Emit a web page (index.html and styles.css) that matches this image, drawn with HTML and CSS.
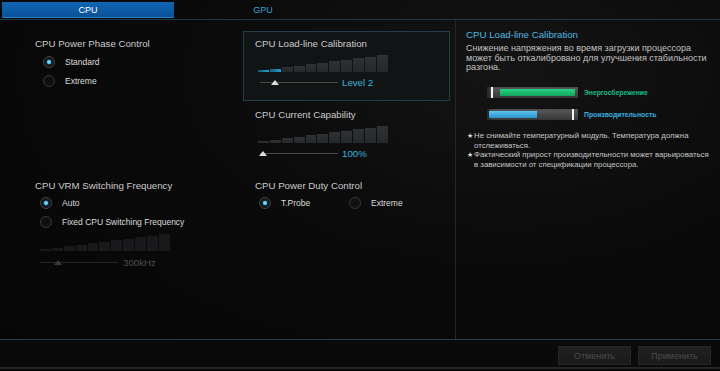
FILE: index.html
```html
<html>
<head>
    <title>CPU Power</title>
    <link rel="stylesheet" href="styles.css">
</head>
<body>
    <div id="tabs">
        <div class="tab active">CPU</div>
        <div class="tab">GPU</div>
    </div>

    <div id="main">
        <div id="settings">
            <div class="group left">
                <p class="title">CPU Power Phase Control</p>
                <div class="radios wide">
                    <div class="radio checked"><span class="dot"></span>Standard</div>
                    <div class="radio"><span class="dot"></span>Extreme</div>
                </div>
            </div>

            <div class="middle">
                <div class="group box">
                    <p class="title">CPU Load-line Calibration</p>
                    <div class="steps">
                        <span class="on" style="height:2px"></span>
                        <span class="on" style="height:3.5px"></span>
                        <span style="height:5px"></span>
                        <span style="height:6.5px"></span>
                        <span style="height:8px"></span>
                        <span style="height:9.5px"></span>
                        <span style="height:11px"></span>
                        <span style="height:12.5px"></span>
                        <span style="height:14px"></span>
                        <span style="height:15.5px"></span>
                        <span style="height:17px"></span>
                    </div>
                    <div class="track-row">
                        <div class="track"><span class="thumb" style="left:15px"></span></div>
                        <span class="value">Level 2</span>
                    </div>
                </div>

                <div class="group plain">
                    <p class="title">CPU Current Capability</p>
                    <div class="steps">
                        <span style="height:2px"></span>
                        <span style="height:3.5px"></span>
                        <span style="height:5px"></span>
                        <span style="height:6.5px"></span>
                        <span style="height:8px"></span>
                        <span style="height:9.5px"></span>
                        <span style="height:11px"></span>
                        <span style="height:12.5px"></span>
                        <span style="height:14px"></span>
                        <span style="height:15.5px"></span>
                        <span style="height:17px"></span>
                    </div>
                    <div class="track-row">
                        <div class="track"><span class="thumb" style="left:3px"></span></div>
                        <span class="value">100%</span>
                    </div>
                </div>
            </div>

            <div class="group left lower">
                <p class="title">CPU VRM Switching Frequency</p>
                <div class="radios">
                    <div class="radio checked"><span class="dot"></span>Auto</div>
                    <div class="radio"><span class="dot"></span>Fixed CPU Switching Frequency</div>
                </div>
                <div class="disabled">
                    <div class="steps">
                        <span style="height:2px"></span>
                        <span style="height:3.5px"></span>
                        <span style="height:5px"></span>
                        <span style="height:6.5px"></span>
                        <span style="height:8px"></span>
                        <span style="height:9.5px"></span>
                        <span style="height:11px"></span>
                        <span style="height:12.5px"></span>
                        <span style="height:14px"></span>
                        <span style="height:15.5px"></span>
                        <span style="height:17px"></span>
                    </div>
                    <div class="track-row">
                        <div class="track"><span class="thumb" style="left:18px"></span></div>
                        <span class="value">300kHz</span>
                    </div>
                </div>
            </div>

            <div class="group plain lower">
                <p class="title">CPU Power Duty Control</p>
                <div class="radios inline">
                    <div class="radio checked"><span class="dot"></span>T.Probe</div>
                    <div class="radio"><span class="dot"></span>Extreme</div>
                </div>
            </div>
        </div>

        <div id="help">
            <p class="help-title">CPU Load-line Calibration</p>
            <p class="help-text">Снижение напряжения во время загрузки процессора может быть откалибровано для улучшения стабильности разгона.</p>

            <div class="meter">
                <div class="bar saving"><span class="mark"></span><span class="fill"></span></div>
                <span class="label green">Энергосбережение</span>
            </div>
            <div class="meter">
                <div class="bar perf"><span class="fill"></span><span class="mark"></span></div>
                <span class="label blue">Производительность</span>
            </div>

            <div class="notes">
                <div class="note"><span class="star">★</span><span>Не снимайте температурный модуль. Температура должна отслеживаться.</span></div>
                <div class="note"><span class="star">★</span><span>Фактический прирост производительности может варьироваться в зависимости от спецификации процессора.</span></div>
            </div>
        </div>
    </div>

    <div id="footer">
        <button class="btn">Отменить</button>
        <button class="btn">Применить</button>
    </div>
</body>
</html>
```

FILE: styles.css
```css
body {
    margin: 0;
    width: 720px;
    height: 371px;
    overflow: hidden;
    color: #c8c8c8;
    font-family: "Liberation Sans", Arial, sans-serif;
    background: radial-gradient(ellipse at 70% 20%, #141414 0%, #0a0a0a 45%, #060606 100%);
}

p {
    margin: 0;
}

#tabs {
    display: flex;
    height: 20px;
    padding: 2px 0 0 2px;
    box-sizing: border-box;
    border-bottom: 1px solid #17394a;
}

    #tabs .tab {
        width: 172px;
        height: 16px;
        line-height: 16px;
        text-align: center;
        font-size: 9px;
        color: #3b9fd6;
    }

    #tabs .tab + .tab {
        width: 178px;
    }

    #tabs .active {
        color: #fff;
        background: linear-gradient(#1165b4, #0a5198);
        box-shadow: inset 0 -1px 0 #2f7fc4;
    }

#main {
    display: flex;
    height: 319px;
}

#settings {
    width: 455px;
    display: grid;
    grid-template-columns: 243px 212px;
    grid-template-rows: 149px auto;
    padding-top: 11px;
    box-sizing: border-box;
}

.title {
    font-size: 9.7px;
    line-height: 12px;
    color: #cbcbcb;
    white-space: nowrap;
}

.group.left {
    padding: 7px 0 0 35px;
}

.group.lower {
    padding-top: 0;
}

.group.plain {
    padding-left: 12px;
}

.middle {
    display: flex;
    flex-direction: column;
}

.box {
    width: 207px;
    height: 70px;
    box-sizing: border-box;
    padding: 6px 11px 0 11px;
    border: 1px solid #223f48;
    background: #111415;
}

.plain:not(.lower) {
    margin-top: 8px;
}

/* radio buttons */
.radios {
    margin-top: 4px;
    padding-left: 5px;
    display: flex;
    flex-direction: column;
    gap: 5px;
}

    .radios.wide {
        margin-top: 5px;
        padding-left: 8px;
    }

    .radios.inline {
        flex-direction: row;
        gap: 0;
        padding-left: 4px;
    }

        .radios.inline .radio {
            width: 90px;
        }

.radio {
    display: flex;
    align-items: center;
    height: 14px;
    font-size: 8.5px;
    color: #dcdcdc;
    white-space: nowrap;
}

    .radio .dot {
        width: 12px;
        height: 12px;
        box-sizing: border-box;
        border: 1px solid #363636;
        border-radius: 50%;
        background: radial-gradient(#0c0c0c, #151515);
        margin-right: 10px;
        display: flex;
        align-items: center;
        justify-content: center;
    }

    .radio.checked .dot {
        border-color: #444;
    }

        .radio.checked .dot::after {
            content: "";
            width: 4px;
            height: 4px;
            border-radius: 50%;
            background: #6bd8ff;
            box-shadow: 0 0 3px #2aa6e0;
        }

/* staircase slider */
.steps {
    display: flex;
    align-items: flex-end;
    gap: 1px;
    height: 17px;
    margin: 5px 0 0 3px;
}

    .steps span {
        width: 10.9px;
        background: linear-gradient(#2f3234, #26292b);
    }

        .steps span.on {
            background: linear-gradient(90deg, #125c78, #2a9fcb);
        }

.track-row {
    display: flex;
    align-items: center;
    height: 10px;
    margin: 5px 0 0 5px;
}

.track {
    position: relative;
    width: 78px;
    height: 1px;
    background: #4a4a4a;
}

    .track .thumb {
        position: absolute;
        top: -2px;
        margin-left: -4px;
        width: 0;
        height: 0;
        border-left: 4px solid transparent;
        border-right: 4px solid transparent;
        border-bottom: 5px solid #dedede;
    }

.value {
    margin-left: 4px;
    font-size: 9.7px;
    color: #3bb3dd;
}

.disabled {
    margin-top: 3px;
}

    .disabled .steps {
        margin-left: 5px;
    }

        .disabled .steps span {
            background: #17191a;
        }

    .disabled .track-row {
        margin-top: 6px;
    }

    .disabled .track {
        background: #262626;
    }

        .disabled .track .thumb {
            border-bottom-color: #3a3a3a;
        }

    .disabled .value {
        margin-left: 5px;
        color: #4e4e4e;
    }

/* help panel */
#help {
    flex: 1;
    border-left: 1px solid #262626;
    padding: 9px 8px 0 10px;
}

.help-title {
    font-size: 9.7px;
    line-height: 12px;
    color: #4cb9e2;
}

.help-text {
    margin-top: 3px;
    font-size: 9px;
    line-height: 9.5px;
    color: #c2c2c2;
}

.meter {
    display: flex;
    align-items: center;
    margin: 14.5px 0 0 21px;
}

    .meter + .meter {
        margin-top: 11px;
    }

.bar {
    display: flex;
    width: 91px;
    height: 11px;
    box-sizing: border-box;
    background: linear-gradient(#5c5c5c, #444 60%, #3a3a3a);
    box-shadow: inset 3px 0 2px #2a2a2a;
}

    .bar .mark {
        width: 2px;
        background: #f4f4f4;
    }

    .bar .fill {
        margin: 2px 0;
    }

    .bar.saving {
        padding-left: 4px;
    }

        .bar.saving .fill {
            width: 75px;
            margin-left: 7px;
            background: linear-gradient(#27d283, #12a35d);
        }

    .bar.perf {
        padding-left: 2px;
    }

        .bar.perf .fill {
            width: 48px;
            background: linear-gradient(#5cc4ef, #2c94cc);
        }

        .bar.perf .mark {
            margin-left: auto;
            margin-right: 4px;
        }

.label {
    margin-left: 6px;
    font-size: 6.8px;
    font-weight: bold;
}

    .label.green {
        color: #1dbf86;
    }

    .label.blue {
        color: #3cb0e2;
    }

.notes {
    margin-top: 11px;
}

.note {
    display: flex;
    font-size: 7.8px;
    line-height: 9.5px;
    color: #c6c6c6;
}

    .note .star {
        width: 7px;
        flex: none;
        margin-left: 1px;
        font-size: 7px;
        color: #ddd;
    }

#footer {
    display: flex;
    justify-content: flex-end;
    gap: 7px;
    height: 30px;
    box-sizing: border-box;
    padding: 6px 9px 0 0;
    border-top: 1px solid #1d4256;
    border-bottom: 2px solid #262626;
    background: #0a0a0a;
}

.btn {
    width: 73px;
    height: 19px;
    padding: 0;
    border: 1px solid #262626;
    background: linear-gradient(#202020, #1a1a1a);
    color: #4c4c4c;
    font-family: "Liberation Sans", Arial, sans-serif;
    font-size: 9px;
}
```
